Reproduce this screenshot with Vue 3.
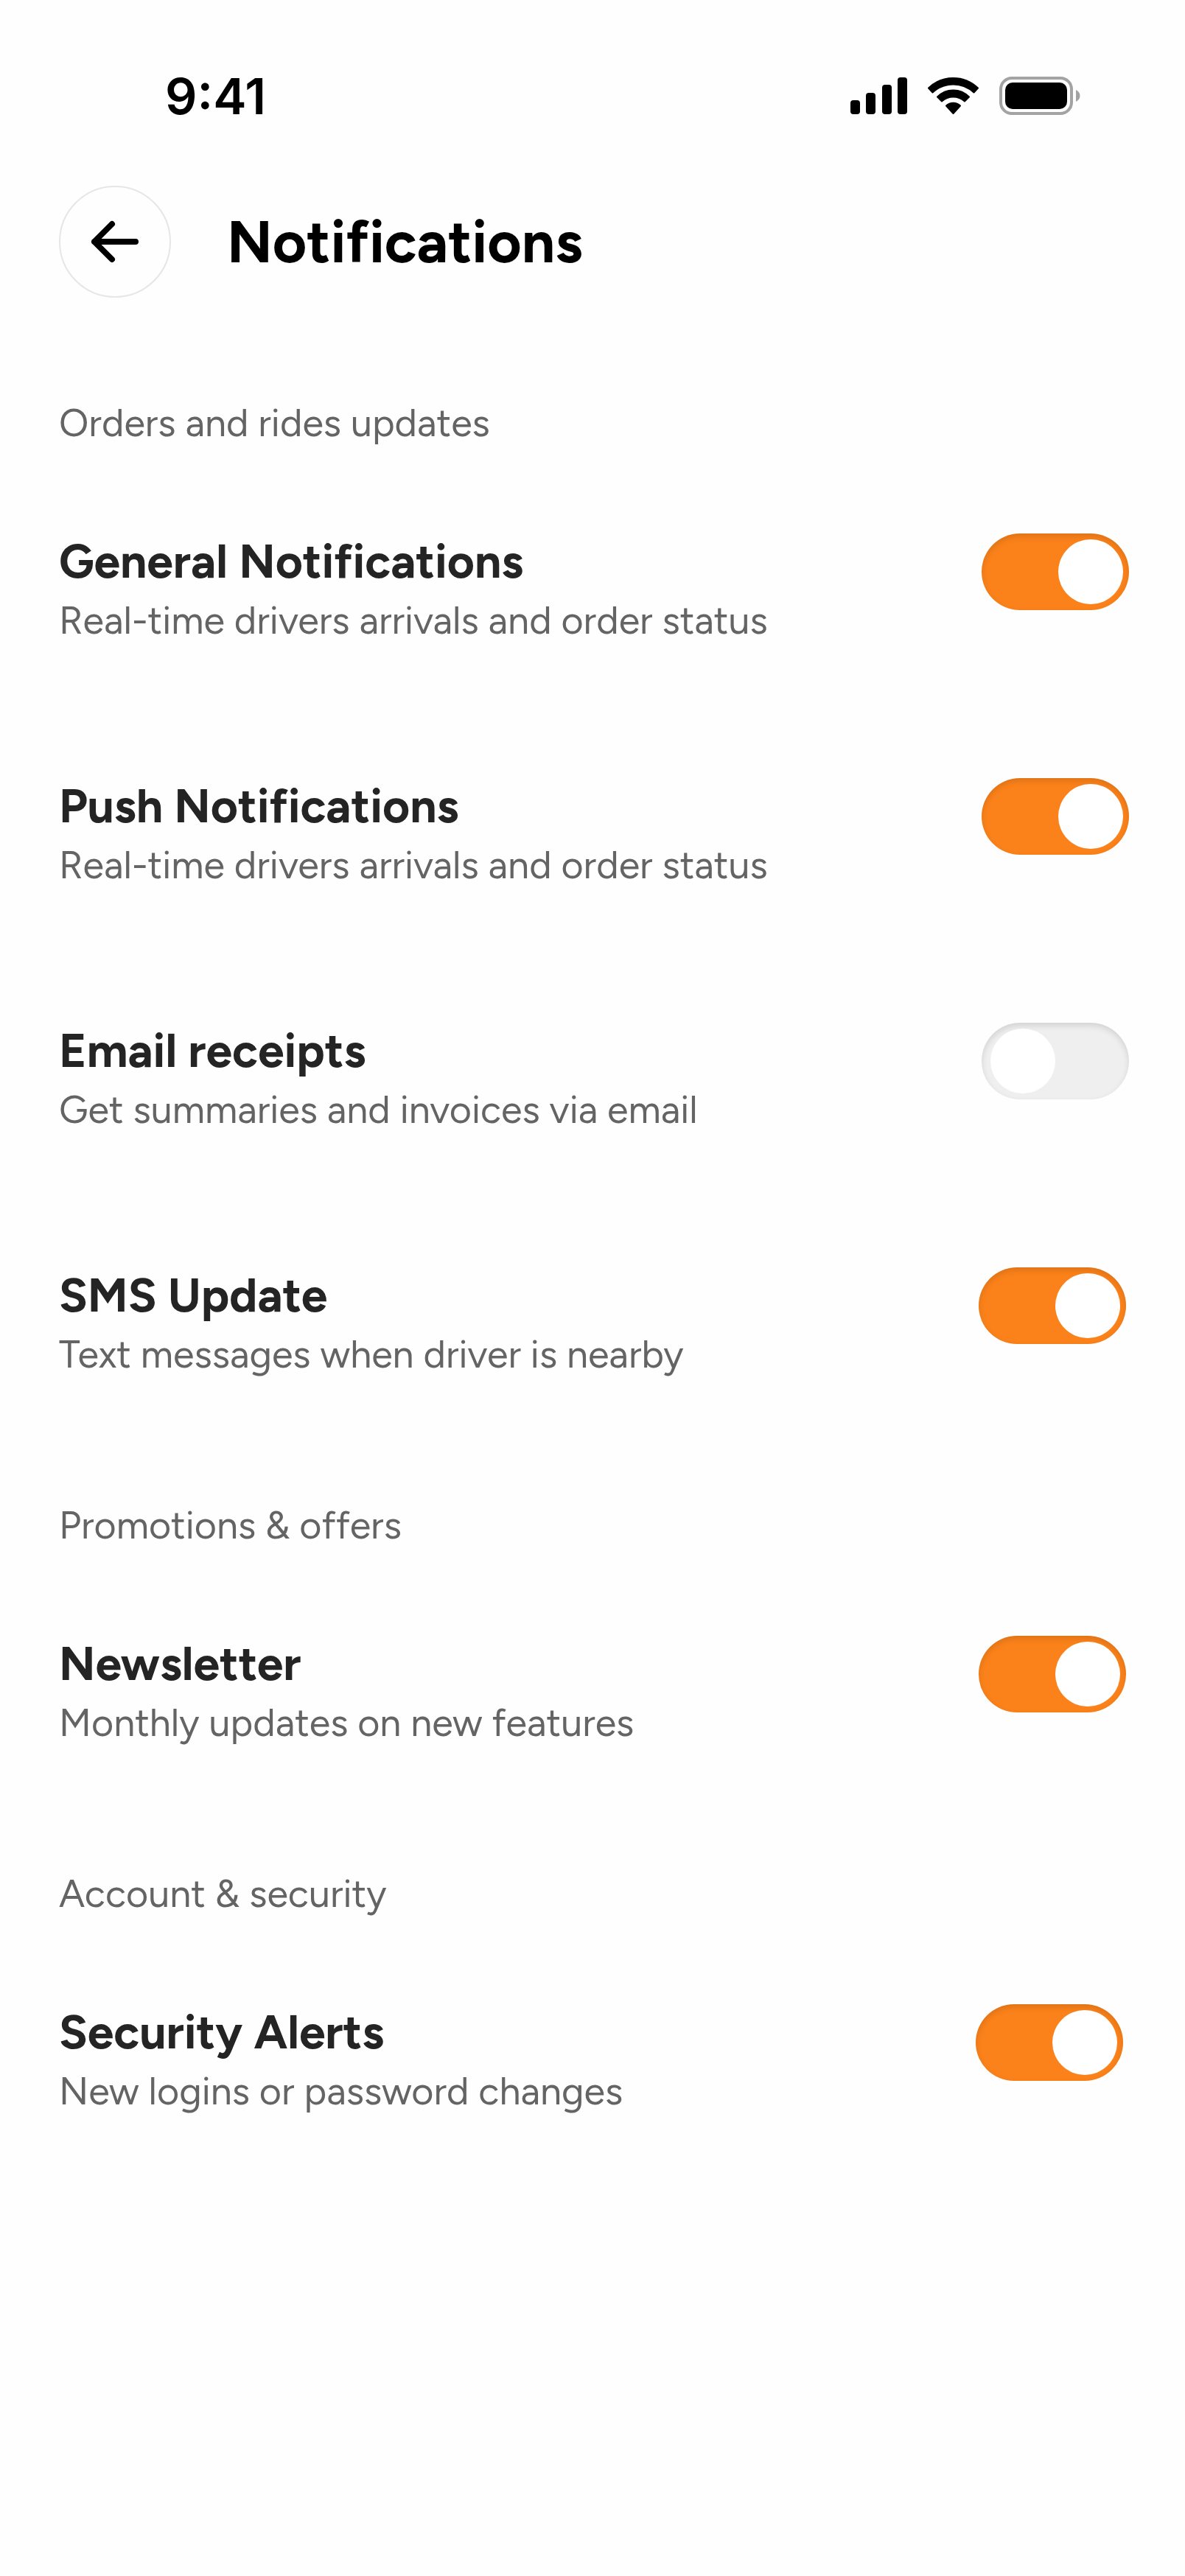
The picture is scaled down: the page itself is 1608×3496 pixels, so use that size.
<template>
  <div class="screen">
    <div class="status-bar">
      <span class="time">9:41</span>
      <div class="status-icons">
        <svg class="icon-signal" viewBox="0 0 78 52" aria-hidden="true">
          <rect x="0" y="32" width="13" height="19" rx="4" />
          <rect x="21" y="22" width="13" height="29" rx="4" />
          <rect x="43" y="11" width="13" height="40" rx="4" />
          <rect x="64" y="1" width="13" height="50" rx="4" />
        </svg>
        <svg class="icon-wifi" viewBox="0 0 70 52" aria-hidden="true">
          <path d="M1 15.500A48 48 0 0 1 68 15.500L62.500 21.500A41 41 0 0 0 6.500 21.500z" />
          <path d="M13 27.500A30 30 0 0 1 56 27.500L50 33.500A23 23 0 0 0 19 33.500z" />
          <path d="M25 39.500A14 14 0 0 1 44 39.500L34.500 50z" />
        </svg>
        <svg class="icon-battery" viewBox="0 0 110 52" aria-hidden="true">
          <rect class="battery-shell" x="2" y="2" width="96" height="48" rx="15" />
          <rect x="8" y="8" width="84" height="36" rx="10" />
          <path class="battery-cap" d="M104 18c3.500 1.500 5.500 4.500 5.500 8s-2 6.500-5.500 8z" />
        </svg>
      </div>
    </div>

    <header class="header">
      <button class="back" type="button" aria-label="Back">
        <svg viewBox="0 0 72 72" aria-hidden="true">
          <path d="M64 36H8M32 12L8 36l24 24" />
        </svg>
      </button>
      <h1 class="page-title">Notifications</h1>
    </header>

    <main class="sections">
      <section v-for="section in sections" :key="section.title" class="section">
        <h2 class="section-title">{{ section.title }}</h2>
        <div class="rows">
          <div
            v-for="item in section.items"
            :key="item.id"
            :class="['row', item.inset && 'row-inset-' + item.inset]"
          >
            <label class="row-text" :for="item.id">
              <span class="row-title">{{ item.title }}</span>
              <span class="row-desc">{{ item.desc }}</span>
            </label>
            <input
              :id="item.id"
              v-model="item.enabled"
              class="toggle"
              type="checkbox"
              role="switch"
            />
          </div>
        </div>
      </section>
    </main>
  </div>
</template>

<script setup>
import { ref } from 'vue'

const sections = ref([
  {
    title: 'Orders and rides updates',
    items: [
      {
        id: 'general',
        title: 'General Notifications',
        desc: 'Real-time drivers arrivals and order status',
        enabled: true,
      },
      {
        id: 'push',
        title: 'Push Notifications',
        desc: 'Real-time drivers arrivals and order status',
        enabled: true,
      },
      {
        id: 'email',
        title: 'Email receipts',
        desc: 'Get summaries and invoices via email',
        enabled: false,
      },
      {
        id: 'sms',
        title: 'SMS Update',
        desc: 'Text messages when driver is nearby',
        enabled: true,
        inset: 'sm',
      },
    ],
  },
  {
    title: 'Promotions & offers',
    items: [
      {
        id: 'newsletter',
        title: 'Newsletter',
        desc: 'Monthly updates on new features',
        enabled: true,
        inset: 'sm',
      },
    ],
  },
  {
    title: 'Account & security',
    items: [
      {
        id: 'security',
        title: 'Security Alerts',
        desc: 'New logins or password changes',
        enabled: true,
        inset: 'md',
      },
    ],
  },
])
</script>

<style>
body {
  margin: 0;
  background: #fefefe;
}
</style>

<style scoped>
.screen {
  box-sizing: border-box;
  min-height: 100vh;
  padding: 92px 76px 120px 80px;
  background: #fefefe;
  color: #242424;
  font-family: Figtree, Lato, sans-serif;
}

.status-bar {
  display: flex;
  align-items: center;
  justify-content: space-between;
  height: 76px;
  padding: 0 66px 0 144px;
  color: #000;
}
.time {
  font-family: Inter, sans-serif;
  font-size: 68px;
  font-weight: 600;
  line-height: 76px;
}
.status-icons {
  display: flex;
  align-items: center;
  gap: 27px;
}
.icon-signal {
  width: 78px;
  height: 52px;
}
.icon-wifi {
  width: 70px;
  height: 52px;
}
.icon-battery {
  width: 110px;
  height: 52px;
}
.icon-wifi path {
  stroke: #000;
  stroke-width: 2;
  stroke-linejoin: round;
}
.battery-shell {
  fill: none;
  stroke: #a3a3a3;
  stroke-width: 4;
}
.battery-cap {
  fill: #a3a3a3;
}

.header {
  display: flex;
  align-items: center;
  gap: 76px;
  margin-top: 84px;
}
.back {
  display: flex;
  align-items: center;
  justify-content: center;
  box-sizing: border-box;
  width: 152px;
  height: 152px;
  padding: 0;
  border: 2px solid #e6e6e6;
  border-radius: 50%;
  background: transparent;
  cursor: pointer;
}
.back svg {
  width: 72px;
  height: 72px;
  fill: none;
  stroke: #000;
  stroke-width: 8;
  stroke-linecap: round;
  stroke-linejoin: round;
}
.page-title {
  margin: 0;
  color: #000;
  font-size: 80px;
  font-weight: 700;
  line-height: 96px;
}

.sections {
  display: flex;
  flex-direction: column;
  gap: 168px;
  margin-top: 138px;
}
.section-title {
  margin: 0 0 116px;
  color: #646464;
  font-size: 52px;
  font-weight: 400;
  line-height: 64px;
}
.rows {
  display: flex;
  flex-direction: column;
  gap: 180px;
}
.row {
  display: flex;
  align-items: flex-start;
  justify-content: space-between;
  gap: 40px;
}
.row-inset-sm {
  padding-right: 4px;
}
.row-inset-md {
  padding-right: 8px;
}
.row-text {
  display: flex;
  flex-direction: column;
  gap: 8px;
}
.row-title {
  font-size: 64px;
  font-weight: 700;
  line-height: 80px;
}
.row-desc {
  color: #646464;
  font-size: 52px;
  line-height: 64px;
}

.toggle {
  appearance: none;
  display: flex;
  flex-shrink: 0;
  align-items: center;
  box-sizing: border-box;
  width: 200px;
  height: 104px;
  margin: 2px 0 0;
  padding: 0 8px 0 12px;
  border-radius: 52px;
  background: #efefef;
  box-shadow: inset 0 4px 8px rgba(0, 0, 0, 0.12);
  cursor: pointer;
}
.toggle::before {
  content: '';
  width: 88px;
  height: 88px;
  border-radius: 50%;
  background: #fff;
}
.toggle:checked {
  justify-content: flex-end;
  background: #fb821a;
}
</style>
